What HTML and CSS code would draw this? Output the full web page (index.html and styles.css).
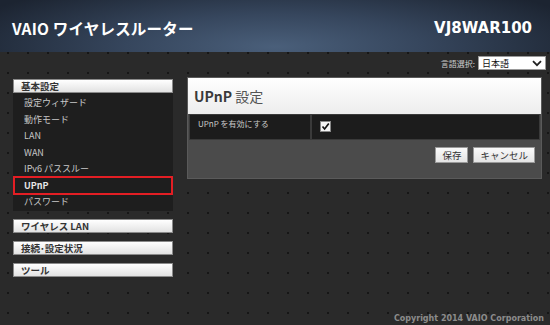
FILE: index.html
```html
<!DOCTYPE html>
<html lang="ja">
<head>
<meta charset="utf-8">
<title>VAIO ワイヤレスルーター</title>
<link rel="stylesheet" href="styles.css">
</head>
<body>
<div class="page">
  <header class="header">
    <div class="title">VAIO ワイヤレスルーター</div>
    <div class="model">VJ8WAR100</div>
  </header>
  <div class="langbar">
    <span class="langlabel">言語選択:</span>
    <div class="select"><span>日本語</span>
      <svg class="chev" width="10" height="7" viewBox="0 0 10 7"><path d="M1 1.2 L5 5.2 L9 1.2" fill="none" stroke="#222" stroke-width="1.8"/></svg>
    </div>
  </div>
  <div class="content">
    <nav class="sidebar">
      <div class="group">
        <div class="ghead">基本設定</div>
        <ul class="items">
          <li>設定ウィザード</li>
          <li>動作モード</li>
          <li>LAN</li>
          <li>WAN</li>
          <li>IPv6 パススルー</li>
          <li class="active">UPnP</li>
          <li>パスワード</li>
        </ul>
      </div>
      <div class="ghead solo">ワイヤレス LAN</div>
      <div class="ghead solo">接続･設定状況</div>
      <div class="ghead solo">ツール</div>
    </nav>
    <main class="panel">
      <div class="phead"><b>UPnP</b> 設定</div>
      <div class="row">
        <div class="rlabel">UPnP を有効にする</div>
        <div class="rvalue">
          <span class="check"><svg width="9" height="9" viewBox="0 0 9 9"><path d="M1.5 4.5 L3.6 7 L7.8 1.5" fill="none" stroke="#111" stroke-width="1.7"/></svg></span>
        </div>
      </div>
      <div class="actions">
        <button class="btn">保存</button>
        <button class="btn">キャンセル</button>
      </div>
    </main>
  </div>
  <footer class="footer">Copyright 2014 VAIO Corporation</footer>
</div>
</body>
</html>
```
FILE: styles.css
```css
html, body {
  margin: 0;
  padding: 0;
}
body {
  width: 550px;
  height: 325px;
  overflow: hidden;
  background-color: #2a2a2a;
  background-image: radial-gradient(circle, #161616 0.9px, transparent 1.2px);
  background-size: 20px 20px;
  background-position: -2px 3px;
  font-family: "DejaVu Sans", "Noto Sans CJK JP", sans-serif;
}
.page {
  display: flex;
  flex-direction: column;
  height: 325px;
}
.header {
  height: 52px;
  display: flex;
  align-items: center;
  justify-content: space-between;
  padding: 4px 18px 0 12px;
  box-sizing: border-box;
  background: radial-gradient(ellipse 60% 140% at 50% 90%, #4a5f7a 0%, #36465d 45%, #1c2431 100%);
  color: #fff;
}
.title {
  font-family: "Noto Sans CJK JP", sans-serif;
  font-weight: 700;
  font-size: 15.5px;
  letter-spacing: 0.2px;
}
.model {
  font-family: "DejaVu Sans", sans-serif;
  font-weight: 700;
  font-size: 15px;
}
.langbar {
  display: flex;
  justify-content: flex-end;
  align-items: center;
  gap: 3px;
  padding: 3px 4px 0 0;
  height: 16px;
}
.langlabel {
  font-family: "Noto Sans CJK JP", sans-serif;
  font-size: 8px;
  color: #ccc;
}
.select {
  width: 68px;
  height: 14px;
  background: #fff;
  border: 1px solid #999;
  display: flex;
  align-items: center;
  justify-content: space-between;
  padding: 0 3px 0 3px;
  box-sizing: border-box;
  font-family: "Noto Sans CJK JP", sans-serif;
  font-size: 9px;
  color: #111;
}
.content {
  display: flex;
  align-items: flex-start;
  gap: 14px;
  padding: 8px 8px 0 13px;
}
.sidebar {
  width: 160px;
  display: flex;
  flex-direction: column;
  gap: 8px;
}
.group {
  display: flex;
  flex-direction: column;
}
.ghead {
  height: 14px;
  box-sizing: border-box;
  background: linear-gradient(#ffffff, #e2e2e2);
  border: 1px solid #8a8a8a;
  font-family: "Noto Sans CJK JP", sans-serif;
  font-weight: 700;
  font-size: 9.5px;
  line-height: 12px;
  color: #333;
  padding-left: 7px;
}
.items {
  list-style: none;
  margin: 0;
  padding: 1px 0 1px;
  background: #1e1e1e;
}
.items li {
  height: 16.5px;
  line-height: 14px;
  box-sizing: border-box;
  padding-left: 9px;
  font-family: "Noto Sans CJK JP", sans-serif;
  font-size: 9px;
  color: #c8c8c8;
  border: 2px solid transparent;
}
.items li.active {
  height: 19px;
  line-height: 15px;
  margin: -1px 0 -1.5px;
  border-color: #e31e24;
  color: #e8e8e8;
  font-weight: 700;
}
.panel {
  width: 355px;
  background: #4b4b4b;
  border: 1px solid #5a5a5a;
  box-sizing: border-box;
  margin-top: -2px;
  padding-bottom: 15px;
}
.phead {
  height: 36px;
  background: linear-gradient(#ffffff, #ededed);
  font-family: "Noto Sans CJK JP", sans-serif;
  font-weight: 400;
  font-size: 14px;
  line-height: 36px;
  color: #555;
  padding-left: 6px;
}
.phead b {
  font-weight: 700;
  color: #3a3a3a;
}
.row {
  display: flex;
  height: 24px;
  background: #1c1c1c;
  border: 1px solid #3a3a3a;
  margin: 0 1px;
}
.rlabel {
  width: 112px;
  border-right: 2px solid #3a3a3a;
  font-family: "Noto Sans CJK JP", sans-serif;
  font-size: 8px;
  color: #c8c8c8;
  padding: 3px 0 0 8px;
}
.rvalue {
  padding: 6px 0 0 8px;
}
.check {
  display: block;
  width: 9px;
  height: 9px;
  background: #f4f4f4;
  border: 0.5px solid #888;
}
.check svg {
  display: block;
}
.actions {
  display: flex;
  justify-content: flex-end;
  gap: 5px;
  padding: 7px 6px 0 0;
}
.btn {
  height: 16px;
  padding: 0 6px;
  background: linear-gradient(#fafafa, #e4e4e4);
  border: 1px solid #9a9a9a;
  border-radius: 0;
  font-family: "Noto Sans CJK JP", sans-serif;
  font-size: 9.5px;
  line-height: 14px;
  color: #333;
}
.footer {
  margin-top: auto;
  text-align: right;
  padding: 0 6px 2px 0;
  font-family: "DejaVu Sans", sans-serif;
  font-weight: 700;
  font-size: 8px;
  color: #8c8c8c;
}
```
